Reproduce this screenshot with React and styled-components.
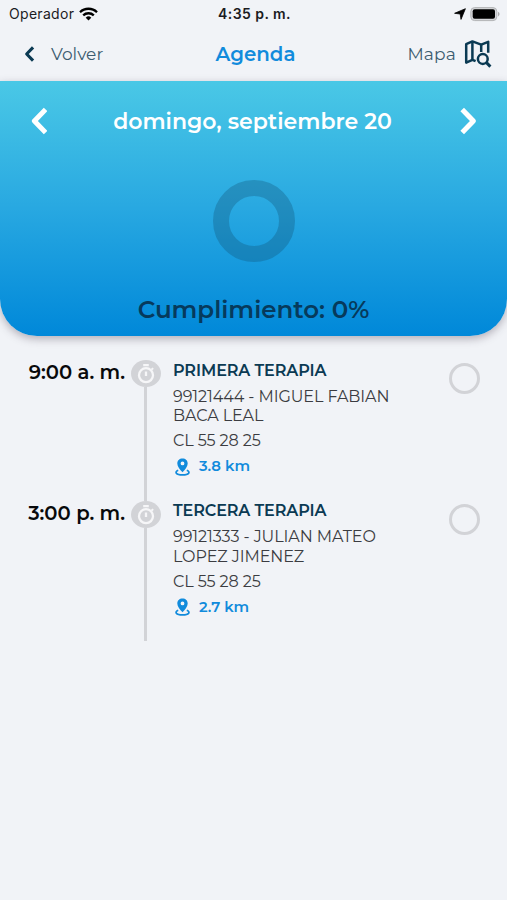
import React from 'react';
import styled, { createGlobalStyle } from 'styled-components';

const NAVY = '#0b3a53';
const BLUE = '#118bdc';
const GREY = '#d2d3d7';

const GlobalStyle = createGlobalStyle`
  * {
    box-sizing: border-box;
  }
  body {
    margin: 0;
    background-color: #f1f3f7;
    font-family: Montserrat, Inter, sans-serif;
  }
`;

const Screen = styled.div`
  display: flex;
  flex-direction: column;
  min-height: 900px;
`;

const StatusBar = styled.div`
  display: grid;
  grid-template-columns: 1fr auto 1fr;
  align-items: center;
  height: 28px;
  padding: 0 7px 0 9px;
  color: #1b1c1f;
  font-family: Inter, sans-serif;
  font-size: 14px;
  line-height: 28px;
`;

const Carrier = styled.div`
  display: flex;
  align-items: center;
  gap: 5px;
  letter-spacing: 0.3px;
`;

const Clock = styled.div`
  font-weight: 600;
  letter-spacing: 0.45px;
`;

const Indicators = styled.div`
  display: flex;
  align-items: center;
  justify-content: flex-end;
  gap: 4px;
`;

const NavBar = styled.nav`
  display: grid;
  grid-template-columns: 1fr auto 1fr;
  align-items: center;
  height: 53px;
  padding: 0 15px 2px 23px;
`;

const NavLink = styled.div`
  display: flex;
  align-items: center;
  justify-content: ${props => props.$end ? 'flex-end' : 'flex-start'};
  gap: ${props => props.$end ? '8px' : '16px'};
  color: #3c5c70;
  font-size: 17px;
  letter-spacing: ${props => props.$end ? '0.2px' : '0'};

  svg {
    color: ${NAVY};
  }
`;

const Title = styled.h1`
  margin: 0;
  padding-right: 4px;
  color: ${BLUE};
  font-size: 19.8px;
  font-weight: 600;
`;

const Summary = styled.section`
  display: flex;
  flex-direction: column;
  align-items: center;
  height: 255px;
  border-radius: 0 0 37px 37px;
  background: linear-gradient(#4ac8e6, #28a8e1 50%, #0088d9);
  box-shadow: 0 3px 8px rgba(60, 50, 70, 0.35);
`;

const DayPicker = styled.div`
  display: flex;
  align-items: center;
  justify-content: space-between;
  width: 100%;
  height: 80px;
  padding: 0 30px;
  color: #fff;
`;

const Day = styled.h2`
  margin: 0;
  padding-right: 2px;
  font-size: 22px;
  font-weight: 600;
`;

const Donut = styled.div`
  width: 82px;
  height: 82px;
  margin-top: 19px;
  border: 16px solid rgba(15, 75, 110, 0.3);
  border-radius: 50%;
`;

const Compliance = styled.div`
  margin-top: 30px;
  color: #063a5c;
  font-size: 24.5px;
  font-weight: 600;
  line-height: 34px;
`;

const Schedule = styled.main`
  padding: 24px 27px 0 0;
`;

const Row = styled.article`
  display: grid;
  grid-template-columns: 125px 41px 1fr 31px;
  height: 140.5px;
`;

const Time = styled.div`
  color: #08090b;
  font-size: 19.6px;
  font-weight: 600;
  line-height: 25px;
  text-align: right;
  white-space: nowrap;
`;

const Timeline = styled.div`
  display: flex;
  flex-direction: column;
  align-items: center;
`;

const Badge = styled.div`
  display: flex;
  align-items: center;
  justify-content: center;
  flex: none;
  width: 30px;
  height: 27px;
  border-radius: 50%;
  background-color: ${GREY};
`;

const Line = styled.div`
  flex: 1;
  width: 3px;
  background-color: ${GREY};
`;

const Details = styled.div`
  padding: 0.8px 0 0 7px;
  color: #3b3c41;
  font-size: 16px;
  line-height: 19.3px;
`;

const Therapy = styled.h3`
  margin: 0 0 6px;
  color: ${NAVY};
  font-size: 16px;
  font-weight: 600;
  line-height: 20px;
  letter-spacing: -0.1px;
`;

const Patient = styled.div`
  letter-spacing: -0.08px;
  white-space: nowrap;
`;

const Address = styled.div`
  margin-top: 6px;
  letter-spacing: -0.1px;
`;

const Distance = styled.div`
  display: flex;
  align-items: center;
  gap: 9px;
  margin-top: 6.4px;
  padding-left: 2px;
  color: ${BLUE};
  font-size: 14.8px;
  font-weight: 600;
`;

const Check = styled.div`
  width: 31px;
  height: 31px;
  margin-top: 3px;
  border: 3px solid ${GREY};
  border-radius: 50%;
`;

const WifiIcon = () => (
  <svg width="19" height="14" viewBox="0 0 19 14" fill="none" stroke="#000" strokeWidth="2.3">
    <path d="M1 5.2a12.2 12.2 0 0 1 17 0" />
    <path d="M4.2 8.4a7.6 7.6 0 0 1 10.6 0" />
    <path d="M9.5 13.5 6.7 10.7a4 4 0 0 1 5.6 0z" fill="#000" stroke="none" />
  </svg>
);

const LocationIcon = () => (
  <svg width="12" height="12" viewBox="0 0 12 12">
    <path d="M11.4.7 7 11.4 6.2 6 .6 5.3z" fill="#000" stroke="#000" strokeWidth=".8" strokeLinejoin="round" />
  </svg>
);

const BatteryIcon = () => (
  <svg width="30" height="15" viewBox="0 0 30 15">
    <rect x=".8" y=".6" width="26" height="13" rx="3.8" fill="#d4d5d8" stroke="#b3b4b7" strokeWidth="1" />
    <rect x="2.7" y="2.2" width="22.3" height="9.6" rx="2" fill="#000" />
    <path d="M28 4.8v4.6q1.6-.8 1.6-2.3T28 4.8" fill="#aaabad" />
  </svg>
);

const Chevron = ({ width, height, stroke, right }) => (
  <svg
    width={width}
    height={height}
    viewBox="0 0 17 28"
    fill="none"
    stroke="currentColor"
    strokeWidth={stroke}
    strokeLinejoin="round"
  >
    <path d={right ? 'M2.2 2.4 13.4 14 2.2 25.6' : 'M15.6 2.4 4.4 14l11.2 11.6'} />
  </svg>
);

const MapIcon = () => (
  <svg width="28" height="29" viewBox="0 0 28 29" fill="none" stroke="currentColor" strokeWidth="2.5">
    <path d="M11.6 22.2 8.4 20.8 2.2 23.6V5.2L8.4 2.4l8.8 3.2 7-2.8v11" strokeLinejoin="round" />
    <path d="M8.4 2.6v18M17.2 5.6v7.4" />
    <circle cx="18.8" cy="20" r="4.9" />
    <path d="m22.2 23.4 4.2 4.2" strokeWidth="3" />
  </svg>
);

const StopwatchIcon = () => (
  <svg width="20" height="21" viewBox="0 0 20 21" fill="none" stroke="#f6f6f8" strokeWidth="2.3">
    <circle cx="10" cy="12.2" r="7" />
    <path d="M7.2 2.2h5.6M10 8.6v4.4M15.6 5.2l1.4 1.4" />
  </svg>
);

const PinIcon = () => (
  <svg width="15" height="18" viewBox="0 0 15 18">
    <path
      fill={BLUE}
      fillRule="evenodd"
      d="M7.5.6C4.4.6 2.3 2.7 2.3 5.5c0 3.2 2.6 5.9 5.2 8.8 2.6-2.9 5.2-5.6 5.2-8.8C12.7 2.7 10.6.6 7.5.6zm0 2.9a1.9 1.9 0 1 1 0 3.8 1.9 1.9 0 0 1 0-3.8z"
    />
    <path d="M3.2 12.3C-.6 13.8.7 16.9 7.5 16.9s8.1-3.1 4.3-4.6" fill="none" stroke={BLUE} strokeWidth="1.7" />
  </svg>
);

const appointments = [
  {
    time: '9:00 a. m.',
    therapy: 'PRIMERA TERAPIA',
    patient: ['99121444 - MIGUEL FABIAN', 'BACA LEAL'],
    address: 'CL 55 28 25',
    distance: '3.8 km',
  },
  {
    time: '3:00 p. m.',
    therapy: 'TERCERA TERAPIA',
    patient: ['99121333 - JULIAN MATEO', 'LOPEZ JIMENEZ'],
    address: 'CL 55 28 25',
    distance: '2.7 km',
  },
];

const Appointment = ({ time, therapy, patient, address, distance }) => (
  <Row>
    <Time>{time}</Time>
    <Timeline>
      <Badge><StopwatchIcon /></Badge>
      <Line />
    </Timeline>
    <Details>
      <Therapy>{therapy}</Therapy>
      {patient.map(line => <Patient key={line}>{line}</Patient>)}
      <Address>{address}</Address>
      <Distance><PinIcon />{distance}</Distance>
    </Details>
    <Check />
  </Row>
);

const App = () => (
  <Screen>
    <GlobalStyle />
    <StatusBar>
      <Carrier>Operador <WifiIcon /></Carrier>
      <Clock>4:35 p. m.</Clock>
      <Indicators><LocationIcon /><BatteryIcon /></Indicators>
    </StatusBar>
    <NavBar>
      <NavLink><Chevron width={12} height={16} stroke={5.4} />Volver</NavLink>
      <Title>Agenda</Title>
      <NavLink $end>Mapa<MapIcon /></NavLink>
    </NavBar>
    <Summary>
      <DayPicker>
        <Chevron width={17} height={28} stroke={5} />
        <Day>domingo, septiembre 20</Day>
        <Chevron width={17} height={28} stroke={5} right />
      </DayPicker>
      <Donut />
      <Compliance>Cumplimiento: 0%</Compliance>
    </Summary>
    <Schedule>
      {appointments.map(item => <Appointment key={item.time} {...item} />)}
    </Schedule>
  </Screen>
);

export default App;
